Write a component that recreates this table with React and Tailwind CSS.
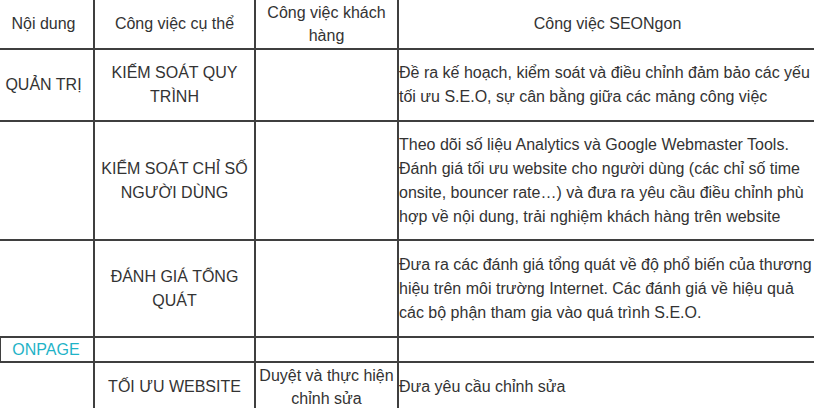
import React from "react";

const C = ({ children, className = "" }) => (
  <div className={`border-r-2 border-b-2 border-[#3f3f3f] flex items-center justify-center text-center ${className}`}>
    {children}
  </div>
);

const L = ({ children, className = "" }) => (
  <div className={`border-r-2 border-b-2 border-[#3f3f3f] flex items-center text-left ${className}`}>
    <div>{children}</div>
  </div>
);

export default function App() {
  return (
    <div className="w-[814px] h-[408px] overflow-hidden bg-white">
      <div
        className="ml-[-6px] grid grid-cols-[101px_161px_143px_419px] grid-rows-[50px_72px_119px_97px_25px_49px] text-[16px] leading-[24px] text-[#333333]"
        style={{ fontFamily: '"Liberation Sans", Arial, sans-serif' }}
      >
        <C>Nội dung</C>
        <C>Công việc cụ thể</C>
        <C className="leading-[23px]">Công việc khách<br />hàng</C>
        <C>Công việc SEONgon</C>

        <C>QUẢN TRỊ</C>
        <C>KIẾM SOÁT QUY<br />TRÌNH</C>
        <C></C>
        <L>Đề ra kế hoạch, kiểm soát và điều chỉnh đảm bảo các yếu tối ưu S.E.O, sự cân bằng giữa các mảng công việc</L>

        <C></C>
        <C>KIỂM SOÁT CHỈ SỐ<br />NGƯỜI DÙNG</C>
        <C></C>
        <L>Theo dõi số liệu Analytics và Google Webmaster Tools. Đánh giá tối ưu website cho người dùng (các chỉ số time onsite, bouncer rate…) và đưa ra yêu cầu điều chỉnh phù hợp về nội dung, trải nghiệm khách hàng trên website</L>

        <C></C>
        <C>ĐÁNH GIÁ TỔNG<br />QUÁT</C>
        <C></C>
        <L>Đưa ra các đánh giá tổng quát về độ phổ biến của thương hiệu trên môi trường Internet. Các đánh giá về hiệu quả các bộ phận tham gia vào quá trình S.E.O.</L>

        <div className="border-r-2 border-b-2 border-[#3f3f3f] pl-[6px]">
          <div className="h-full border-l border-[#3f3f3f] flex items-center justify-center text-[#1fb3c7] leading-[23px] pr-[2px]">
            ONPAGE
          </div>
        </div>
        <C></C>
        <C></C>
        <C></C>

        <C></C>
        <C>TỐI ƯU WEBSITE</C>
        <C className="leading-[23px]">Duyệt và thực hiện<br />chỉnh sửa</C>
        <L>Đưa yêu cầu chỉnh sửa</L>
      </div>
    </div>
  );
}
